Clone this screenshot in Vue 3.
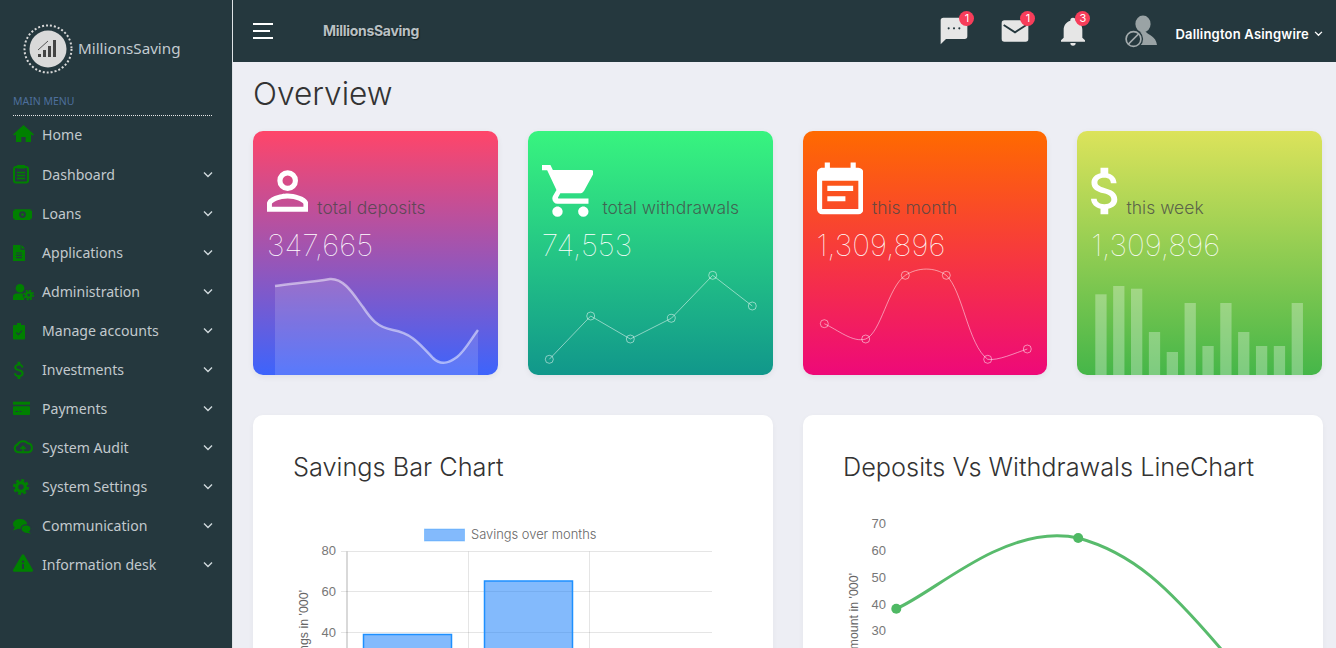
<template>
  <div class="layout">
    <aside class="sidebar">
      <div class="brand">
        <svg class="brand-logo" width="50" height="50" viewBox="0 0 50 50">
          <circle cx="25" cy="25" r="23.5" fill="none" stroke="#d8d8d8" stroke-width="2" stroke-dasharray="2 2" />
          <circle cx="25" cy="25" r="18.5" fill="#d9d9d9" />
          <rect x="15" y="30" width="3" height="3" fill="#444" />
          <rect x="20" y="26" width="3" height="7" fill="#444" />
          <rect x="25" y="22" width="3" height="11" fill="#444" />
          <rect x="30" y="16" width="3" height="17" fill="#444" />
          <path d="M15 26 L25 17" stroke="#555" stroke-width="1" />
        </svg>
        <span class="brand-name">MillionsSaving</span>
      </div>
      <div class="menu-label">MAIN MENU</div>
      <nav class="menu">
        <a v-for="item in menu" :key="item.label" class="menu-item">
          <svg class="menu-icon" width="22" height="20" viewBox="0 0 22 20">
            <path v-if="item.icon === 'home'" d="M10.5 1 L21 10.5 L19.5 11.5 L18 10.2 V18 H12.7 V13 H8.3 V18 H3 V10.2 L1.5 11.5 L0 10.5 Z" />
            <template v-else-if="item.icon === 'dashboard'">
              <rect class="line" x="1" y="2" width="14" height="15.5" rx="2" />
              <path class="line thin" d="M4 7.5H12M4 10.5H12M4 13.5H12" />
              <rect x="4" y="0" width="8" height="3.5" />
            </template>
            <template v-else-if="item.icon === 'loans'">
              <rect x="0" y="5.3" width="19" height="10.7" />
              <circle class="cut" cx="9.5" cy="10.6" r="3.4" />
              <circle cx="9.5" cy="10.6" r="1.3" />
              <path class="cut" d="M0 5.3H1.5V6.8H0ZM17.5 5.3H19V6.8H17.5ZM0 14.5H1.5V16H0ZM17.5 14.5H19V16H17.5Z" />
            </template>
            <template v-else-if="item.icon === 'file'">
              <path d="M0 2H7.5V6.8H12V18H0Z M8.5 2 L12 5.6 H8.5Z" />
              <path class="cut-line" d="M3 10H9M3 12.3H9M3 14.6H9" />
            </template>
            <template v-else-if="item.icon === 'admin'">
              <circle cx="7" cy="6.3" r="4.3" />
              <path d="M0 18 V15 Q0 11.5 4 11.5 H10 Q11.5 11.5 12 12.5 L11 18 Z" />
              <circle class="cut" cx="15.7" cy="13" r="6" />
              <circle class="line ring" cx="15.7" cy="13" r="2.6" />
              <circle class="line teeth" cx="15.7" cy="13" r="4.6" />
            </template>
            <template v-else-if="item.icon === 'check'">
              <rect x="0" y="4" width="12" height="14.5" rx="1" />
              <rect x="4" y="2" width="4" height="4" />
              <path class="cut-line" d="M3.3 11.5 L5.4 13.6 L9 9.6" />
            </template>
            <path
              v-else-if="item.icon === 'dollar'"
              transform="translate(-5 -1) scale(.95)"
              d="M11.8,10.9C9.53,10.31 8.8,9.7 8.8,8.75C8.8,7.66 9.81,6.9 11.5,6.9C13.28,6.9 13.94,7.75 14,9H16.21C16.14,7.28 15.09,5.7 13,5.19V3H10V5.16C8.06,5.58 6.5,6.84 6.5,8.77C6.5,11.08 8.41,12.23 11.2,12.9C13.7,13.5 14.2,14.38 14.2,15.31C14.2,16 13.71,17.1 11.5,17.1C9.44,17.1 8.63,16.18 8.5,15H6.32C6.44,17.19 8.08,18.42 10,18.83V21H13V18.85C14.95,18.5 16.5,17.35 16.5,15.3C16.5,12.46 14.07,11.5 11.8,10.9Z"
            />
            <template v-else-if="item.icon === 'card'">
              <rect x="0" y="2.7" width="17" height="3" />
              <rect x="0" y="7.2" width="17" height="8.8" rx="1" />
              <path class="cut-line" d="M2.5 12.5H5M6.5 12.5H8.5" />
            </template>
            <template v-else-if="item.icon === 'cloud'">
              <path class="line" d="M5.3 14.3 A4 4 0 0 1 4.6 6.5 A6 5.3 0 0 1 14.8 5.3 A4.6 4.6 0 0 1 15.5 14.3 Z" />
              <path class="line thin" d="M10 14V8.5 M7.4 11 L10 8.4 L12.6 11" />
            </template>
            <template v-else-if="item.icon === 'cog'">
              <circle class="line gear-ring" cx="8" cy="10" r="4.4" />
              <circle class="line gear-teeth" cx="8" cy="10" r="6.8" />
            </template>
            <template v-else-if="item.icon === 'chat'">
              <ellipse cx="7" cy="8" rx="7" ry="5" />
              <path d="M2 11 L0 14.5 L6 12.5Z" />
              <ellipse class="gap" cx="13" cy="12.8" rx="5" ry="4" />
              <path d="M15 15 L18 17.6 L11 16.5Z" />
            </template>
            <template v-else-if="item.icon === 'info'">
              <path class="solid" d="M10 0.5 L18.8 15.5 H1.2 Z" />
              <circle class="dark" cx="10" cy="6.6" r="1.2" />
              <rect class="dark" x="9" y="9" width="2" height="5" />
            </template>
          </svg>
          <span class="menu-text">{{ item.label }}</span>
          <svg v-if="item.sub" class="chevron" width="10" height="7" viewBox="0 0 10 7">
            <path d="M1 1.5 L5 5.5 L9 1.5" />
          </svg>
        </a>
      </nav>
    </aside>

    <div class="main">
      <header class="topbar">
        <button class="burger" aria-label="menu"><i></i><i class="short"></i><i></i></button>
        <div class="top-title">MillionsSaving</div>
        <div class="top-actions">
          <div class="notif chat-slot">
            <svg width="32" height="32" viewBox="0 0 24 24">
              <path d="M20,2H4A2,2 0 0,0 2,4V22L6,18H20A2,2 0 0,0 22,16V4C22,2.89 21.1,2 20,2Z" />
              <circle class="notif-mark" cx="8" cy="10" r=".8" />
              <circle class="notif-mark" cx="12" cy="10" r=".8" />
              <circle class="notif-mark" cx="16" cy="10" r=".8" />
            </svg>
            <span class="badge">1</span>
          </div>
          <div class="notif mail-slot">
            <svg width="32" height="32" viewBox="0 0 24 24">
              <rect x="2" y="4" width="20" height="16" rx="2" />
              <path class="notif-line" d="M3.5 7.5 L12 13 L20.5 7.5" />
            </svg>
            <span class="badge">1</span>
          </div>
          <div class="notif bell-slot">
            <svg width="32" height="32" viewBox="0 0 24 24"><path d="M21,19V20H3V19L5,17V11C5,7.9 7.03,5.17 10,4.29C10,4.19 10,4.1 10,4A2,2 0 0,1 12,2A2,2 0 0,1 14,4C14,4.1 14,4.19 14,4.29C16.97,5.17 19,7.9 19,11V17L21,19M14,21A2,2 0 0,1 12,23A2,2 0 0,1 10,21" /></svg>
            <span class="badge">3</span>
          </div>
          <svg class="avatar" width="34" height="32" viewBox="0 -2 34 32">
            <ellipse cx="18" cy="7" rx="7.6" ry="8.4" fill="#9aa3a5" />
            <path d="M7 28 C8 19 13 18 15 15 H21 C23 18 31 19 32 28 Z" fill="#9aa3a5" />
            <circle cx="8.5" cy="22" r="9.6" fill="#25383e" />
            <circle cx="8.5" cy="22" r="7.4" fill="none" stroke="#a3abad" stroke-width="1.7" />
            <path d="M3.5 27 L13.5 17" stroke="#a3abad" stroke-width="1.7" />
          </svg>
          <div class="user">Dallington Asingwire</div>
          <svg class="user-chevron" width="9" height="6" viewBox="0 0 10 7"><path d="M1 1 L5 5 L9 1" /></svg>
        </div>
      </header>

      <div class="content">
        <h1 class="page-title">Overview</h1>

        <section class="stats">
          <article v-for="s in stats" :key="s.label" class="stat" :class="s.theme">
            <div class="stat-head">
              <svg class="stat-icon" :width="s.box[2] * scale" height="62" :viewBox="`${s.box[0]} 0 ${s.box[2]} 24`">
                <path :d="s.icon" />
              </svg>
              <span class="stat-label">{{ s.label }}</span>
            </div>
            <div class="stat-value">{{ s.value }}</div>
            <svg class="spark" width="245" height="100" viewBox="0 0 245 100">
              <template v-if="s.theme === 'pink'">
                <path class="area" d="M22 11 C 40 8.5 60 7 77 4 C 92 3 102 22 110 32 C 118 44 124 52 140 55 C 158 58 166 68 180 83 C 188 91 196 88 204 82 C 212 76 218 64 225 55 V100 H22 Z" />
                <path class="curve" d="M22 11 C 40 8.5 60 7 77 4 C 92 3 102 22 110 32 C 118 44 124 52 140 55 C 158 58 166 68 180 83 C 188 91 196 88 204 82 C 212 76 218 64 225 55" />
              </template>
              <template v-else-if="s.theme === 'green'">
                <polyline class="thin-line" :points="pointList(linePts)" />
                <circle v-for="p in linePts" :key="p[0]" class="dot" :cx="p[0]" :cy="p[1]" r="4" />
              </template>
              <template v-else-if="s.theme === 'orange'">
                <path class="thin-line" d="M21.3 48.7 C 35 55 50 68 62.7 64 C 78 58 85 12 102.3 0.3 C 115 -8 132 -8 143.3 0.3 C 160 16 165 70 184.7 84.3 C 195 86 212 78 224.3 74" />
                <circle v-for="p in curvePts" :key="p[0]" class="dot" :cx="p[0]" :cy="p[1]" r="4" />
              </template>
              <template v-else>
                <rect v-for="(h, i) in barHeights" :key="i" class="bar" :x="18.3 + i * 17.85" :y="100 - h" width="11.3" :height="h" />
              </template>
            </svg>
          </article>
        </section>

        <section class="charts">
          <article class="panel">
            <h2 class="panel-title">Savings Bar Chart</h2>
            <svg class="chart" width="440" height="300" viewBox="0 0 440 300">
              <rect x="131.5" y="14" width="40" height="12" fill="rgba(30,130,250,.55)" stroke="rgba(30,144,255,.35)" />
              <text class="legend" x="178" y="23.5">Savings over months</text>
              <g class="grid">
                <path d="M48 36.5H419M48 76.5H419M48 117.5H419M48 158.5H419M48 199.5H419" />
                <path d="M175.5 36.5V300M296.5 36.5V300" />
              </g>
              <path class="axis" d="M54 36.5V300" />
              <text class="tick" x="43" y="40">80</text>
              <text class="tick" x="43" y="81">60</text>
              <text class="tick" x="43" y="122">40</text>
              <text class="axis-title" transform="translate(14.5 75) rotate(-90)">Savings in '000'</text>
              <rect class="col" x="70.5" y="119.5" width="88" height="180" />
              <rect class="col" x="191.5" y="66" width="88" height="234" />
            </svg>
          </article>
          <article class="panel">
            <h2 class="panel-title">Deposits Vs Withdrawals LineChart</h2>
            <svg class="chart" width="440" height="300" viewBox="0 0 440 300">
              <text class="tick" x="43" y="13">70</text>
              <text class="tick" x="43" y="40">60</text>
              <text class="tick" x="43" y="67">50</text>
              <text class="tick" x="43" y="94">40</text>
              <text class="tick" x="43" y="120">30</text>
              <text class="axis-title" transform="translate(14.5 58) rotate(-90)">Amount in '000'</text>
              <path class="trend" d="M53.3 93.7 C 90 78 150 20.7 214 20.7 C 222 20.7 229 21.5 235.2 23 C 290 38 325 72 378 134" />
              <circle class="trend-dot" cx="53.3" cy="93.7" r="5" />
              <circle class="trend-dot" cx="235.2" cy="23" r="5" />
            </svg>
          </article>
        </section>
      </div>
    </div>
  </div>
</template>

<script setup>
const menu = [
  { label: 'Home', icon: 'home', sub: false },
  { label: 'Dashboard', icon: 'dashboard', sub: true },
  { label: 'Loans', icon: 'loans', sub: true },
  { label: 'Applications', icon: 'file', sub: true },
  { label: 'Administration', icon: 'admin', sub: true },
  { label: 'Manage accounts', icon: 'check', sub: true },
  { label: 'Investments', icon: 'dollar', sub: true },
  { label: 'Payments', icon: 'card', sub: true },
  { label: 'System Audit', icon: 'cloud', sub: true },
  { label: 'System Settings', icon: 'cog', sub: true },
  { label: 'Communication', icon: 'chat', sub: true },
  { label: 'Information desk', icon: 'info', sub: true }
]

const scale = 62 / 24

const stats = [
  {
    label: 'total deposits',
    value: '347,665',
    theme: 'pink',
    box: [4, 0, 16],
    icon: 'M12,4A4,4 0 0,1 16,8A4,4 0 0,1 12,12A4,4 0 0,1 8,8A4,4 0 0,1 12,4M12,6A2,2 0 0,0 10,8A2,2 0 0,0 12,10A2,2 0 0,0 14,8A2,2 0 0,0 12,6M12,13C14.67,13 20,14.33 20,17V20H4V17C4,14.33 9.33,13 12,13M12,14.9C9.03,14.9 5.9,16.36 5.9,17V18.1H18.1V17C18.1,16.36 14.97,14.9 12,14.9Z'
  },
  {
    label: 'total withdrawals',
    value: '74,553',
    theme: 'green',
    box: [1, 0, 20],
    icon: 'M17,18C15.89,18 15,18.89 15,20A2,2 0 0,0 17,22A2,2 0 0,0 19,20C19,18.89 18.1,18 17,18M1,2V4H3L6.6,11.59L5.24,13.95C5.09,14.23 5,14.57 5,14.9A2,2 0 0,0 7,16.9H19V14.9H7.42A0.25,0.25 0 0,1 7.17,14.65L7.2,14.53L8.1,12.9H15.55C16.3,12.9 16.96,12.5 17.3,11.87L20.88,5.38C20.96,5.24 21,5.07 21,4.9A1,1 0 0,0 20,3.9H5.21L4.27,1.9H1M7,18C5.89,18 5,18.89 5,20A2,2 0 0,0 7,22A2,2 0 0,0 9,20C9,18.89 8.1,18 7,18Z'
  },
  {
    label: 'this month',
    value: '1,309,896',
    theme: 'orange',
    box: [3, 0, 18],
    icon: 'M14,14H7V16H14M19,19H5V8H19M19,3H18V1H16V3H8V1H6V3H5C3.89,3 3,3.9 3,5V19A2,2 0 0,0 5,21H19A2,2 0 0,0 21,19V5A2,2 0 0,0 19,3M17,10H7V12H17V10Z'
  },
  {
    label: 'this week',
    value: '1,309,896',
    theme: 'lime',
    box: [6.32, 0, 10.2],
    icon: 'M11.8,10.9C9.53,10.31 8.8,9.7 8.8,8.75C8.8,7.66 9.81,6.9 11.5,6.9C13.28,6.9 13.94,7.75 14,9H16.21C16.14,7.28 15.09,5.7 13,5.19V3H10V5.16C8.06,5.58 6.5,6.84 6.5,8.77C6.5,11.08 8.41,12.23 11.2,12.9C13.7,13.5 14.2,14.38 14.2,15.31C14.2,16 13.71,17.1 11.5,17.1C9.44,17.1 8.63,16.18 8.5,15H6.32C6.44,17.19 8.08,18.42 10,18.83V21H13V18.85C14.95,18.5 16.5,17.35 16.5,15.3C16.5,12.46 14.07,11.5 11.8,10.9Z'
  }
]

const linePts = [[21.3, 84.3], [62.7, 41], [102.3, 64], [143.3, 43.3], [184.7, 0.3], [224.3, 31]]
const curvePts = [[21.3, 48.7], [62.7, 64], [102.3, 0.3], [143.3, 0.3], [184.7, 84.3], [224.3, 74]]
const barHeights = [80.7, 89, 86.3, 43, 23, 72, 29, 72, 43, 29, 29, 72]

const pointList = (pts) => pts.map((p) => p.join(',')).join(' ')
</script>

<style>
html,
body {
  margin: 0;
  overflow: hidden;
}
</style>

<style scoped>
* {
  box-sizing: border-box;
}

.layout {
  display: flex;
  height: 100vh;
  overflow: hidden;
  background: #edeef4;
  font-family: "Inter", "Liberation Sans", sans-serif;
}

.sidebar {
  flex: 0 0 233px;
  height: 100%;
  background: #25383e;
  border-right: 1px solid #dfe3e6;
  padding-top: 24px;
  font-family: "Noto Sans", "Liberation Sans", sans-serif;
}

.brand {
  display: flex;
  align-items: center;
  gap: 5px;
  padding-left: 23px;
}

.brand-name {
  margin-top: -2px;
  font-size: 15.2px;
  color: #c3cbd0;
}

.menu-label {
  margin: 21px 20px 0 13px;
  padding-bottom: 7px;
  border-bottom: 1px dotted #e8e8e8;
  font-size: 10.5px;
  line-height: 13px;
  color: #4d6f9c;
}

.menu {
  display: flex;
  flex-direction: column;
}

.menu-item {
  display: flex;
  align-items: center;
  height: 39px;
  padding-left: 13px;
  color: #c2c9cd;
  font-size: 14.1px;
}

.menu-item:first-child {
  height: 36px;
  margin-bottom: 3px;
}

.menu-icon {
  flex: none;
  overflow: visible;
  fill: #008000;
}

.menu-text {
  margin-left: 7px;
}

.chevron {
  margin: 0 19px 0 auto;
  fill: none;
  stroke: #cfd8dc;
  stroke-width: 1.4;
}

.line {
  fill: none;
  stroke: #008000;
  stroke-width: 2;
}

.line.thin {
  stroke-width: 1.5;
}

.ring {
  stroke-width: 2.2;
}

.teeth {
  stroke-width: 1.6;
  stroke-dasharray: 2 1.6;
}

.gear-ring {
  stroke-width: 3.4;
}

.gear-teeth {
  stroke-width: 2.4;
  stroke-dasharray: 2.9 2.44;
}

.cut {
  fill: #25383e;
}

.cut-line {
  fill: none;
  stroke: #25383e;
  stroke-width: 1.2;
}

.gap {
  stroke: #25383e;
  stroke-width: 1.2;
}

.solid {
  stroke: #008000;
  stroke-width: 2.5;
  stroke-linejoin: round;
}

.dark {
  fill: #25383e;
}

.main {
  flex: 1;
  min-width: 0;
  display: flex;
  flex-direction: column;
}

.topbar {
  flex: none;
  display: flex;
  align-items: center;
  height: 62px;
  padding-left: 20px;
  background: #25383e;
}

.burger {
  display: flex;
  flex-direction: column;
  gap: 5px;
  width: 20px;
  padding: 0;
  border: 0;
  background: none;
}

.burger i {
  display: block;
  width: 20px;
  height: 2px;
  background: #fff;
}

.burger i.short {
  width: 17px;
}

.top-title {
  margin: -2px 0 0 50px;
  font-size: 14px;
  font-weight: 700;
  letter-spacing: -.3px;
  color: #b9c0c3;
  text-shadow: 1px 1px 1px rgba(0, 0, 0, .5);
}

.top-actions {
  display: flex;
  align-items: center;
  margin-left: auto;
  padding-right: 13px;
}

.notif {
  position: relative;
  width: 32px;
  height: 32px;
  fill: #e6e6e6;
}

.notif-mark {
  fill: #25383e;
}

.notif-line {
  fill: none;
  stroke: #25383e;
  stroke-width: 1.4;
}

.mail-slot {
  margin-left: 29px;
}

.bell-slot {
  margin-left: 26px;
}

.badge {
  position: absolute;
  top: -4px;
  left: 21px;
  width: 15px;
  height: 15px;
  border-radius: 50%;
  background: #f73d5a;
  color: #fff;
  font-size: 11px;
  line-height: 15px;
  text-align: center;
}

.bell-slot .badge {
  left: 18px;
}

.avatar {
  margin-left: 36px;
  overflow: visible;
}

.user {
  margin: 6px 0 0 16px;
  font-size: 13px;
  font-weight: 600;
  letter-spacing: .2px;
  color: #fff;
  white-space: nowrap;
}

.user-chevron {
  margin: 5px 0 0 5px;
  fill: none;
  stroke: #fff;
  stroke-width: 1.5;
}

.content {
  flex: 1;
  min-height: 0;
  padding: 0 14px 0 20px;
}

.page-title {
  margin: 11px 0 17px;
  font-size: 31.6px;
  line-height: 41px;
  font-weight: 300;
  color: #333;
}

.stats {
  display: grid;
  grid-template-columns: repeat(4, 1fr);
  gap: 30px;
}

.stat {
  position: relative;
  display: flex;
  flex-direction: column;
  height: 244px;
  padding: 29px 14px 0;
  border-radius: 10px;
  overflow: hidden;
  box-shadow: 0 2px 6px rgba(0, 0, 0, .06);
}

.pink {
  background: linear-gradient(#ff4569, #3d64fc);
}

.green {
  background: linear-gradient(#38f47f, #11978b);
}

.orange {
  background: linear-gradient(#ff6a00, #ee0979);
}

.lime {
  background: linear-gradient(#dce35b, #45b649);
}

.stat-head {
  display: flex;
  align-items: flex-end;
  gap: 9px;
  height: 62px;
}

.stat-icon {
  flex: none;
  fill: #fff;
}

.stat-label {
  padding-bottom: 4px;
  font-size: 17.5px;
  font-weight: 300;
  color: rgba(70, 70, 70, .8);
  white-space: nowrap;
}

.stat-value {
  margin-top: 3px;
  font-size: 30px;
  line-height: 40px;
  font-weight: 100;
  color: #fff;
}

.spark {
  position: absolute;
  left: 0;
  bottom: 0;
  overflow: visible;
}

.area {
  fill: rgba(255, 255, 255, .14);
}

.curve {
  fill: none;
  stroke: rgba(255, 255, 255, .5);
  stroke-width: 2.5;
}

.thin-line {
  fill: none;
  stroke: rgba(255, 255, 255, .5);
  stroke-width: 1;
}

.dot {
  fill: none;
  stroke: rgba(255, 255, 255, .5);
  stroke-width: 1;
}

.bar {
  fill: rgba(255, 255, 255, .3);
}

.charts {
  display: grid;
  grid-template-columns: repeat(2, 1fr);
  gap: 30px;
  margin-top: 40px;
}

.panel {
  height: 440px;
  padding: 40px;
  background: #fff;
  border-radius: 10px;
  box-shadow: 0 2px 6px rgba(0, 0, 0, .04);
}

.panel-title {
  margin: 0;
  font-size: 25.3px;
  line-height: 24px;
  font-weight: 300;
  color: #333;
  white-space: nowrap;
}

.chart {
  display: block;
  margin-top: 36px;
}

.legend {
  font-size: 12.9px;
  font-weight: 300;
  fill: #666;
}

.grid path {
  fill: none;
  stroke: rgba(0, 0, 0, .1);
}

.axis {
  fill: none;
  stroke: rgba(0, 0, 0, .15);
  stroke-width: 2;
}

.tick {
  font-family: "Liberation Sans", sans-serif;
  font-size: 13px;
  fill: #777;
  text-anchor: end;
}

.axis-title {
  font-family: "Liberation Sans", sans-serif;
  font-size: 12.4px;
  fill: #666;
  text-anchor: end;
}

.col {
  fill: rgba(30, 130, 250, .55);
  stroke: #1e90ff;
  stroke-width: 1.5;
}

.trend {
  fill: none;
  stroke: #58bb6c;
  stroke-width: 3;
}

.trend-dot {
  fill: #4fb964;
}
</style>
